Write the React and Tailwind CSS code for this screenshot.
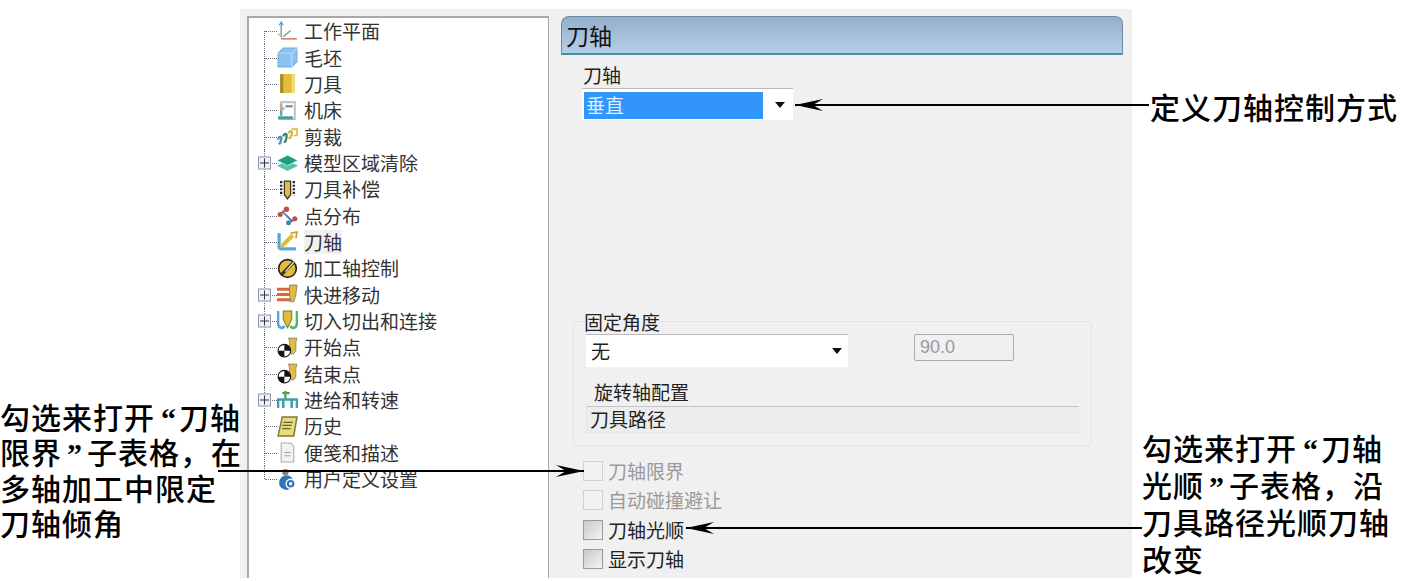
const cjk = "font-['Microsoft_YaHei','Noto_Sans_CJK_SC',sans-serif]";

const Yellow = '#e3bd3a';

function TreeIcon({ name }) {
  const common = { width: 21, height: 21, viewBox: '0 0 20 20', className: 'block shrink-0' };
  switch (name) {
    case 'plane':
      return (
        <svg {...common} fill="none">
          <path d="M4 1v15" stroke="#3d9bd0" strokeWidth="1.2" />
          <path d="M4 17h15" stroke="#d9705f" strokeWidth="1.4" />
          <path d="M6 15l7-6" stroke="#5fb07c" strokeWidth="1.4" />
          <path d="M2 4l2-3 2 3" stroke="#3d9bd0" strokeWidth="1" />
          <path d="M1 13h2" stroke="#d9b24a" strokeWidth="1.4" />
        </svg>
      );
    case 'block':
      return (
        <svg {...common}>
          <path d="M6 1h13v13l-5 5H1V6z" fill="#8ec2ee" stroke="#6aaee4" />
          <path d="M1 6h13v13M14 6l5-5" fill="none" stroke="#b9dbf6" />
        </svg>
      );
    case 'tool':
      return (
        <svg {...common}>
          <rect x="3" y="1" width="14" height="18" fill={Yellow} />
          <rect x="3" y="1" width="3" height="18" fill="#a88a2e" />
          <rect x="14" y="1" width="3" height="18" fill="#f0dc85" />
        </svg>
      );
    case 'machine':
      return (
        <svg {...common} fill="none">
          <path d="M3 2h14v16H2" stroke="#c3c6ca" strokeWidth="2" />
          <path d="M1 17h14" stroke="#4e9aa5" strokeWidth="3" />
          <path d="M4 3v5h3" stroke="#d9a27c" strokeWidth="2.4" />
          <path d="M4 9v6" stroke="#62a9b2" strokeWidth="2.4" />
          <path d="M8 6h7" stroke="#6b8e9c" strokeWidth="2" />
        </svg>
      );
    case 'cut':
      return (
        <svg {...common} fill="none" strokeWidth="2.2">
          <path d="M1 13c1-4 4-3 3 0s-1 5-2 3" stroke="#4a90c8" />
          <path d="M6 10c1-4 4-3 3 1s-1 5-2 3" stroke="#3e7f6b" />
          <path d="M11 7c1-3 4-3 3 1s-2 4-3 3" stroke="#d6b440" />
          <path d="M14 3h5v6h-3" stroke={Yellow} strokeWidth="1.6" />
        </svg>
      );
    case 'layers':
      return (
        <svg {...common}>
          <path d="M0 13l10-5 10 5-10 5z" fill="#58c4a4" />
          <path d="M0 8l10-5 10 5-10 5z" fill="#1f9d83" stroke="#fff" strokeWidth=".6" />
        </svg>
      );
    case 'offset':
      return (
        <svg {...common}>
          <path d="M7 2h6v13l-3 4-3-4z" fill={Yellow} stroke="#333" strokeWidth="1.2" />
          <path d="M4 2v14M16 2v14" stroke="#222" strokeWidth="2.2" strokeDasharray="2 1.4" />
        </svg>
      );
    case 'points':
      return (
        <svg {...common} fill="none">
          <path d="M4 8l6-5M9 10l5 5M16 14l-6 4" stroke="#5d6f8a" strokeWidth="1.6" />
          <path d="M5 6l10 10" stroke="#4c86a8" strokeWidth="1.6" />
          <circle cx="9" cy="4" r="2.6" fill="#c84a4a" />
          <circle cx="3" cy="9" r="2.4" fill="#c84a4a" />
          <circle cx="11" cy="17" r="2.4" fill="#4c86a8" />
          <circle cx="17" cy="13" r="2.4" fill="#c84a4a" />
        </svg>
      );
    case 'axis':
      return (
        <svg {...common} fill="none">
          <path d="M2 2v15" stroke="#4ea8d8" strokeWidth="3" />
          <path d="M2 17h16" stroke="#4ea8d8" strokeWidth="3" />
          <path d="M4 15L15 4" stroke={Yellow} strokeWidth="4" />
          <path d="M13 2l6-1-1 6" stroke="#c8a12e" strokeWidth="1.6" />
        </svg>
      );
    case 'control':
      return (
        <svg {...common}>
          <circle cx="10" cy="10" r="8.4" fill={Yellow} stroke="#222" strokeWidth="1.6" />
          <path d="M4 16L16 4" stroke="#333" strokeWidth="3" />
          <path d="M8 13L16 4" stroke="#fff" strokeWidth="1" />
        </svg>
      );
    case 'rapid':
      return (
        <svg {...common} fill="none">
          <path d="M0 5h13M0 10h13M0 15h13" stroke="#d9653a" strokeWidth="2.8" />
          <path d="M12 1h7l-1 9-2 7h-3l-1-7z" fill={Yellow} stroke="#777" strokeWidth=".8" />
        </svg>
      );
    case 'leads':
      return (
        <svg {...common} fill="none">
          <path d="M1 1v11c0 6 5 6 6 3" stroke="#4ea8d8" strokeWidth="2.4" />
          <path d="M19 1v11c0 6-5 6-6 3" stroke="#58b368" strokeWidth="2.4" />
          <path d="M6 1h8v8l-4 8-4-8z" fill={Yellow} stroke="#67803a" strokeWidth="1" />
        </svg>
      );
    case 'start':
      return (
        <svg {...common}>
          <path d="M11 1h8l-1 4v8l-2 3h-3l-1-3V5z" fill={Yellow} stroke="#777" strokeWidth=".7" />
          <circle cx="7" cy="13" r="6" fill="#fff" stroke="#111" />
          <path d="M7 7a6 6 0 0 1 6 6H7zM7 13v6a6 6 0 0 1-6-6z" fill="#111" />
        </svg>
      );
    case 'feed':
      return (
        <svg {...common} fill="none">
          <path d="M1 18v-8h5v8M14 18v-8h5v8M6 10h8" stroke="#3f9fa8" strokeWidth="2.4" />
          <path d="M8 9V2M5 4h7" stroke="#4f9f58" strokeWidth="2.2" />
        </svg>
      );
    case 'history':
      return (
        <svg {...common}>
          <path d="M5 1h14l-3 18H1z" fill="#e6dc7a" stroke="#7c7a3a" strokeWidth="1.4" />
          <path d="M6 6h9M5 9h9M5 12h8" stroke="#66652f" strokeWidth="1.2" />
        </svg>
      );
    case 'notes':
      return (
        <svg {...common}>
          <path d="M4 1h9l3 3v15H4z" fill="#f2f2f2" stroke="#a9adb0" />
          <path d="M7 10h6M7 13h6" stroke="#9da4a8" />
        </svg>
      );
    case 'user':
      return (
        <svg {...common}>
          <circle cx="8" cy="3" r="3" fill="#8a7f6d" />
          <circle cx="9" cy="13" r="7" fill="#2f72b8" />
          <circle cx="13" cy="14" r="5" fill="#fff" />
          <circle cx="13" cy="14" r="2.6" fill="none" stroke="#2f72b8" strokeWidth="2" />
        </svg>
      );
    default:
      return null;
  }
}

const treeItems = [
  { label: '工作平面', icon: 'plane' },
  { label: '毛坯', icon: 'block' },
  { label: '刀具', icon: 'tool' },
  { label: '机床', icon: 'machine' },
  { label: '剪裁', icon: 'cut' },
  { label: '模型区域清除', icon: 'layers', expand: true },
  { label: '刀具补偿', icon: 'offset' },
  { label: '点分布', icon: 'points' },
  { label: '刀轴', icon: 'axis', active: true },
  { label: '加工轴控制', icon: 'control' },
  { label: '快进移动', icon: 'rapid', expand: true },
  { label: '切入切出和连接', icon: 'leads', expand: true },
  { label: '开始点', icon: 'start' },
  { label: '结束点', icon: 'start' },
  { label: '进给和转速', icon: 'feed', expand: true },
  { label: '历史', icon: 'history' },
  { label: '便笺和描述', icon: 'notes' },
  { label: '用户定义设置', icon: 'user' },
];

function TreeRow({ item, first, last }) {
  return (
    <div className="relative flex h-[26.35px] items-center pl-[28px]">
      <span className={`absolute left-[15px] w-0 border-l border-dotted border-gray-500 ${first ? 'top-1/2 h-1/2' : last ? 'top-0 h-1/2' : 'top-0 h-full'}`} />
      <span className="absolute left-[16px] top-1/2 w-[12px] border-t border-dotted border-gray-500" />
      {item.expand && (
        <span className="absolute left-[9px] top-1/2 flex h-[13px] w-[13px] -translate-y-1/2 items-center justify-center border border-[#8f9aa8] bg-[#eef1f5]">
          <span className="absolute h-px w-[9px] bg-[#334]" />
          <span className="absolute h-[9px] w-px bg-[#334]" />
        </span>
      )}
      <span className="relative z-10 flex w-[27px] bg-white">
        <TreeIcon name={item.icon} />
      </span>
      <span className={`relative text-[19px] leading-[24px] text-[#333] ${item.active ? 'bg-[#f0f0f0]' : ''}`}>{item.label}</span>
    </div>
  );
}

function Caret() {
  return <span className="block h-0 w-0 border-x-[5px] border-t-[6px] border-x-transparent border-t-[#111]" />;
}

function Check({ label, disabled }) {
  return (
    <label className={`flex items-center gap-[5px] text-[19px] leading-[20px] ${disabled ? 'text-[#9a9a9a]' : 'text-[#222]'}`}>
      <span className={`h-[20px] w-[20px] border ${disabled ? 'border-[#d0d0d0] bg-[#f2f2f2]' : 'border-[#9a9a9a] bg-gradient-to-br from-[#c9c9c9] to-[#f4f4f4]'}`} />
      {label}
    </label>
  );
}

function ArrowLine({ className, flip }) {
  return (
    <div className={`absolute h-[12px] ${className}`}>
      <div className="absolute inset-x-0 top-[5px] h-[2px] bg-black" />
      <svg width="30" height="12" viewBox="0 0 30 12" className={`absolute top-0 ${flip ? 'right-0 scale-x-[-1]' : 'left-0'}`}>
        <path d="M0 6L28 0 18 6 28 12z" fill="#000" />
      </svg>
    </div>
  );
}

function Quote({ children, className }) {
  return <span className={`font-['Liberation_Serif',serif] font-bold leading-none tracking-normal ${className}`}>{children}</span>;
}

function Note({ className, children }) {
  return (
    <div className={`absolute whitespace-pre text-[30px] font-medium tracking-[1px] text-black ${className}`}>
      {children}
    </div>
  );
}

export default function App() {
  return (
    <div className={`relative h-[581px] w-[1401px] overflow-hidden bg-white ${cjk}`}>
      <div className="ml-[240px] flex h-[569px] w-[892px] translate-y-[9px] gap-[12px] bg-[#f0f0f0] pl-[7px] pt-[7px]">
        <div className="h-full w-[302px] shrink-0 border-l-2 border-t-2 border-r border-[#a9a9a9] bg-white">
          {treeItems.map((item, i) => (
            <TreeRow key={item.label} item={item} first={i === 0} last={i === treeItems.length - 1} />
          ))}
        </div>

        <div className="w-[562px]">
          <div className="flex h-[39px] items-center rounded-t-[8px] border border-b-2 border-[#6f8ba3] border-b-[#4a8fa0] bg-gradient-to-b from-[#93aeca] to-[#b6cfe8] pl-[4px] text-[23px] text-[#111]">
            刀轴
          </div>

          <div className="ml-[22px] mt-[8px] text-[19px] leading-[24px] text-[#222]">刀轴</div>
          <div className="ml-[21px] mt-[1px] flex h-[32px] w-[211px] items-center border-t border-[#bbb] bg-white pl-[2px] pt-[1px]">
            <span className="flex h-[27px] w-[179px] items-center bg-[#3295fb] pl-[2px] text-[19px] text-[#dfeeff]">垂直</span>
            <span className="ml-[12px]"><Caret /></span>
          </div>

          <div className="relative ml-[12px] mt-[201px] h-[125px] w-[519px] rounded-[4px] border border-[#e3e3e3] px-[12px] pt-[12px]">
            <span className="absolute left-[10px] top-[-11px] bg-[#f0f0f0] text-[19px] leading-[22px] text-[#222]">固定角度</span>
            <div className="flex items-start">
              <div className="flex h-[33px] w-[262px] items-center justify-between border-t border-[#bbb] bg-white pl-[5px] pr-[6px] text-[19px] text-[#222]">
                无
                <Caret />
              </div>
              <div className="ml-[66px] flex h-[27px] w-[100px] items-center rounded-[2px] border border-[#aaa] pl-[5px] font-['Liberation_Sans',sans-serif] text-[18px] text-[#999]">90.0</div>
            </div>
            <div className="ml-[8px] mt-[13px] text-[19px] leading-[24px] text-[#222]">旋转轴配置</div>
            <div className="mt-[2px] flex h-[27px] w-[493px] items-center border border-[#e6e6e6] border-t-[#c4c4c4] bg-[#ededed] pl-[3px] text-[19px] text-[#222]">刀具路径</div>
          </div>

          <div className="ml-[22px] mt-[15px] flex flex-col gap-[9.3px]">
            <Check label="刀轴限界" disabled />
            <Check label="自动碰撞避让" disabled />
            <Check label="刀轴光顺" />
            <Check label="显示刀轴" />
          </div>
        </div>
      </div>

      {/* callouts */}
      <ArrowLine className="left-[795px] top-[99px] w-[354px]" />
      <ArrowLine className="left-[218px] top-[465px] w-[366px]" flip />
      <ArrowLine className="left-[686px] top-[522px] w-[456px]" />
      <Note className="left-[1150px] top-[86px] leading-[44px] -translate-y-[2px]">定义刀轴控制方式</Note>
      <Note className="left-0 top-[399px] leading-[35.3px]">
        <div>勾选来打开<Quote className="ml-[6px] mr-[3px]">“</Quote>刀轴</div>
        <div>限界<Quote className="ml-[5px] mr-[5px]">”</Quote>子表格，在</div>
        <div>多轴加工中限定</div>
        <div>刀轴倾角</div>
      </Note>
      <Note className="left-[1142px] top-[429px] leading-[37px]">
        <div>勾选来打开<Quote className="ml-[6px] mr-[3px]">“</Quote>刀轴</div>
        <div>光顺<Quote className="ml-[5px] mr-[5px]">”</Quote>子表格，沿</div>
        <div>刀具路径光顺刀轴</div>
        <div>改变</div>
      </Note>
    </div>
  );
}
